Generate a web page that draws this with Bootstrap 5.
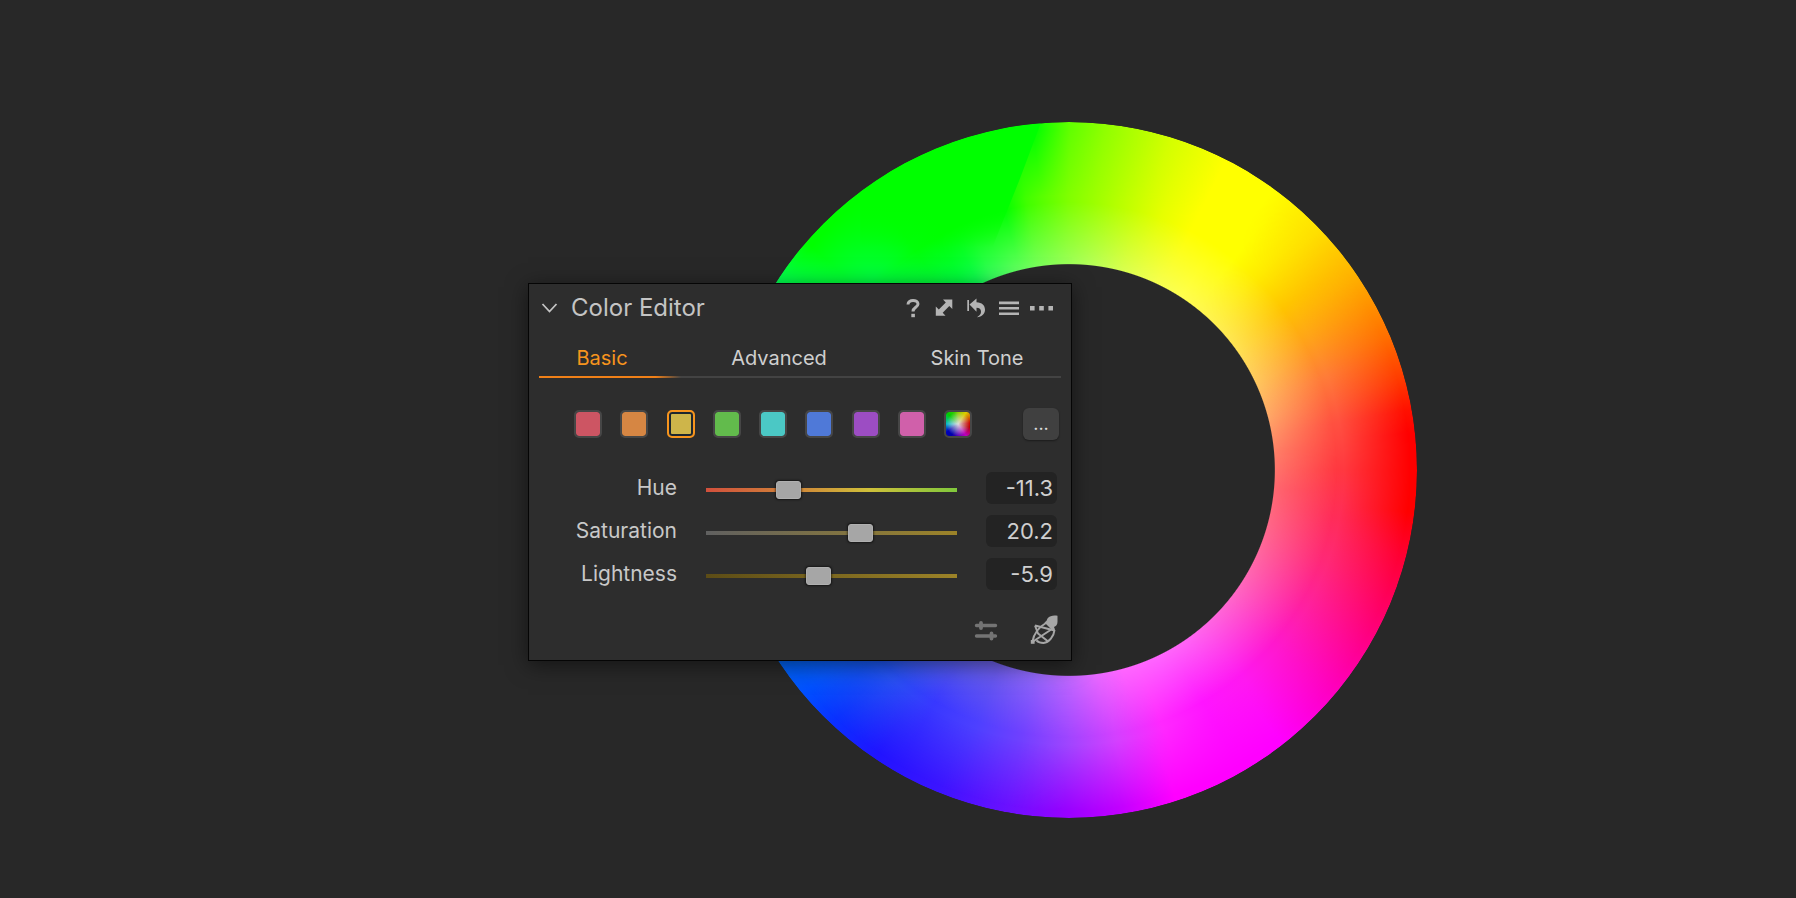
<!DOCTYPE html>
<html lang="en">
<head>
<meta charset="utf-8">
<meta name="viewport" content="width=device-width, initial-scale=1">
<title>Color Editor</title>
<link href="https://cdn.jsdelivr.net/npm/bootstrap@5.3.0/dist/css/bootstrap.min.css" rel="stylesheet">
<style>
  body { background: #282828; color: #c8c8c8; font-family: Inter, "Liberation Sans", sans-serif; }
  .stage { padding: 122px 16px 80px 29.4vw; overflow: hidden; }
  .scene { max-width: 889px; grid-template-columns: 1fr; }
  .scene > * { grid-area: 1 / 1; }

  /* colour wheel: three hue sweeps, cross-faded from the rim to the hole */
  .wheel { width: 696px; aspect-ratio: 1; justify-self: end; display: grid; border-radius: 50%;
    -webkit-mask: radial-gradient(circle closest-side, transparent 59%, #000 59.3%);
    mask: radial-gradient(circle closest-side, transparent 59%, #000 59.3%); }
  .wheel > * { grid-area: 1 / 1; border-radius: 50%; }
  .sweep-rim { background: conic-gradient(#60ff00 0deg, #90ff00 6deg, #d4ff00 17deg, #ff0 27deg, #ff0 36deg, #ffe000 46deg, #ffb000 56deg, #ff7000 67deg, #ff3800 75deg, #ff1000 80deg, #f00 84deg, #f00 97deg, #ff0030 104deg, #ff0070 116deg, #ff00c0 130deg, #f0f 142deg, #f0f 162deg, #c400ff 171deg, #9a00ff 180deg, #6c10ff 190deg, #3c14ff 202deg, #2014ff 214deg, #0a30ff 223deg, #0050ff 230deg, #0066f0 237deg, #0cc 270deg, #00ff60 300deg, #00ff50 303deg, #0f0 311deg, #0f0 354deg, #30ff00 357deg, #60ff00 360deg); }
  .sweep-mid { background: conic-gradient(#80ff00 0deg, #b4ff00 10deg, #e6ff00 20deg, #ff0 27deg, #ff0 38deg, #ffec00 44deg, #ffc400 53deg, #ffa418 61deg, #ff7c38 70deg, #ff5040 80deg, #ff3840 90deg, #ff2c58 100deg, #ff2878 110deg, #ff20a0 120deg, #ff18cc 130deg, #ff18f0 140deg, #ff14ff 150deg, #ff28ff 160deg, #d440ff 170deg, #a045ff 180deg, #7040ff 190deg, #4d40ff 200deg, #3838ff 210deg, #2850f4 220deg, #1858f0 226deg, #0cc 270deg, #00ff50 308deg, #00ff3c 315deg, #00ff08 325deg, #0f0 332deg, #0f0 346deg, #40ff00 351deg, #80ff00 360deg);
    -webkit-mask: radial-gradient(circle closest-side, #000 79%, transparent 98%);
    mask: radial-gradient(circle closest-side, #000 79%, transparent 98%); }
  .sweep-hole { background: conic-gradient(#9cff58 0deg, #b4ff58 6deg, #d8ff50 15deg, #f4ff50 25deg, #ffff50 33deg, #fff050 45deg, #ffe055 55deg, #ffc860 65deg, #ffa868 75deg, #ff8068 85deg, #ff6870 95deg, #ff6888 105deg, #ff68a4 115deg, #ff68c0 125deg, #ff66dc 135deg, #ff66f4 145deg, #f6f 155deg, #f6f 165deg, #e868ff 172deg, #c068ff 180deg, #9068f8 190deg, #7060e8 200deg, #48d 240deg, #00ff50 330deg, #10ff58 334deg, #38ff60 338deg, #60ff60 345deg, #88ff58 355deg, #9cff58 360deg);
    -webkit-mask: radial-gradient(circle closest-side, #000 59%, transparent 77%);
    mask: radial-gradient(circle closest-side, #000 59%, transparent 77%); }
  .clipped-green { background: linear-gradient(#0f0 12%, transparent 18%); clip-path: polygon(20% 0, 46% 0, 43% 8%, 39% 18%, 20% 18%); }

  /* tool panel */
  .panel { width: 544px; max-width: 100%; background: #2d2d2d; border: 1px solid #050505; z-index: 1;
    box-shadow: 0 4px 20px rgba(0, 0, 0, .5); padding: 8px 0 16px; margin-top: 4px; }
  .panel button { background: none; border: 0; padding: 0; color: inherit; }
  .panel svg { display: block; }
  .bar { height: 32px; padding: 0 18px 0 12px; }
  .title { font-size: 24px; line-height: 32px; font-weight: 400; margin: 0 auto 0 12px; color: #c4c4c4; }
  .bar-tools { gap: 14px; color: #b4b4b4; }
  .bar-menus { gap: 11px; }
  .tabs { display: grid; grid-template-columns: 126fr 228fr 168fr; height: 40px; margin: 14px 10px 0;
    background: linear-gradient(#434343, #434343) bottom / 100% 2px no-repeat; }
  .panel .tabs button { font-size: 20px; line-height: 24px; padding-bottom: 0; color: #cfcfcf; white-space: nowrap; }
  .panel .tabs .picked { color: #f7941d; margin-right: -16px; padding-right: 16px;
    background: linear-gradient(90deg, #f08018 82%, #434343) bottom / 100% 2px no-repeat; }
  .swatches { height: 32px; margin: 30px 12px 0 45px; }
  .swatch-set { width: 398px; }
  .swatch { appearance: none; width: 28px; height: 28px; margin: 0; border: 2px solid #464646; border-radius: 5px; background: var(--tint) padding-box; }
  .swatch:checked { border-color: #f7941d; box-shadow: inset 0 0 0 2px #1d2630; }
  .swatch-all { background: radial-gradient(circle, #ddd, transparent 70%) padding-box, conic-gradient(from 0deg, #8c0 0deg, #dc0 35deg, #c00 85deg, #b00 105deg, #b0b 145deg, #60b 175deg, #00a 210deg, #00b 235deg, #0bc 270deg, #0c0 315deg, #3c0 340deg, #8c0 360deg) padding-box; }
  .panel .more { width: 36px; height: 32px; border-radius: 6px; background: #404040; box-shadow: 0 1px 2px rgba(0, 0, 0, .4); font-size: 18px; line-height: 32px; color: #ddd; }
  .sliders { display: grid; gap: 11px; margin: 32px 14px 0; }
  .slider-row { display: grid; grid-template-columns: 134px 1fr 71px; column-gap: 29px; align-items: center; height: 32px; }
  .slider-row label { font-size: 21px; line-height: 24px; text-align: right; }
  .track { appearance: none; width: 100%; height: 20px; margin: 3px 0 0; background: var(--ramp) center / 100% 4px no-repeat; }
  .track::-webkit-slider-thumb { appearance: none; width: 25px; height: 18px; border-radius: 3px; background: #a6a6a6; border: 1px solid #b0b0b0; box-shadow: 0 0 2px 1px rgba(0, 0, 0, .5); }
  .track::-moz-range-thumb { width: 25px; height: 18px; border-radius: 3px; background: #a6a6a6; border: 1px solid #b0b0b0; }
  .amount { width: 100%; height: 32px; border: 0; border-radius: 6px; background: #232323; color: #cfcfcf; font-size: 22px; line-height: 24px; text-align: right; padding: 0 4px; }
  .foot { height: 32px; margin: 24px 13px 0; gap: 32px; color: #a6a6a6; }
  .panel { padding-bottom: 14px; }
</style>
</head>
<body>
<main class="stage min-vh-100">
  <div class="scene d-grid align-items-center">
    <div class="wheel" role="img" aria-label="Color wheel">
      <div class="sweep-rim"></div>
      <div class="sweep-mid"></div>
      <div class="sweep-hole"></div>
      <div class="clipped-green"></div>
    </div>

    <section class="panel position-relative" aria-label="Color Editor">
      <header class="bar d-flex align-items-center">
        <button type="button" aria-label="Collapse">
          <svg width="18" height="18" viewBox="0 0 18 18" fill="none" stroke="#c4c4c4" stroke-width="1.8"><path d="M1.500 5l7 7.500L15.500 5"/></svg>
        </button>
        <h1 class="title">Color Editor</h1>
        <div class="bar-tools d-flex align-items-center">
          <button type="button" aria-label="Help">
            <svg width="16" height="20" viewBox="0 0 16 20" fill="none" stroke="currentColor" stroke-width="3"><path d="M3 6.500C3 1.200 13 1.200 13 6c0 3.500-5 3.200-5 7.500"/><path d="M6.300 17.500h3.600" stroke-width="3.400"/></svg>
          </button>
          <button type="button" aria-label="Expand">
            <svg width="18" height="20" viewBox="0 0 18 20" fill="currentColor"><path d="M8 1.500h9.300V11l-3-3-6.600 6.800 2.800 3H.8V8.500l3 3L10.800 4.600z"/></svg>
          </button>
          <button type="button" aria-label="Reset">
            <svg width="18" height="20" viewBox="0 0 18 20" fill="currentColor"><path d="M.3 2h1.700v11H.3zM2.500 6.500L9.500.5v3.800c5.500.2 8.500 3.200 8.500 7.500 0 4-3 7-8 7.400 3-1.700 4-3.400 4-5.400 0-2.600-1.500-3.800-4.500-4v4z"/></svg>
          </button>
          <div class="bar-menus d-flex">
            <button type="button" aria-label="Presets">
              <svg width="20" height="20" viewBox="0 0 20 20" fill="currentColor"><path d="M0 3.600h20v2.600H0zM0 9h20v2.600H0zM0 14.400h20V17H0z"/></svg>
            </button>
            <button type="button" aria-label="More options">
              <svg width="23" height="20" viewBox="0 0 23 20" fill="currentColor"><path d="M0 8h4.600v4.400H0zM9.200 8h4.600v4.400H9.200zM18.400 8H23v4.400h-4.600z"/></svg>
            </button>
          </div>
        </div>
      </header>

      <nav class="tabs" aria-label="Editor mode">
        <button type="button" class="picked" aria-current="true">Basic</button>
        <button type="button">Advanced</button>
        <button type="button">Skin Tone</button>
      </nav>

      <div class="swatches d-flex align-items-center justify-content-between">
        <div class="swatch-set d-flex justify-content-between" role="radiogroup" aria-label="Color range">
          <input class="swatch" type="radio" name="range" aria-label="Red" style="--tint:linear-gradient(#cd5563,#cd5563)">
          <input class="swatch" type="radio" name="range" aria-label="Orange" style="--tint:linear-gradient(#d68643,#d68643)">
          <input class="swatch" type="radio" name="range" aria-label="Yellow" style="--tint:linear-gradient(#ceb54a,#ceb54a)" checked>
          <input class="swatch" type="radio" name="range" aria-label="Green" style="--tint:linear-gradient(#62bb4c,#62bb4c)">
          <input class="swatch" type="radio" name="range" aria-label="Cyan" style="--tint:linear-gradient(#4bc8c5,#4bc8c5)">
          <input class="swatch" type="radio" name="range" aria-label="Blue" style="--tint:linear-gradient(#4f79d8,#4f79d8)">
          <input class="swatch" type="radio" name="range" aria-label="Purple" style="--tint:linear-gradient(#9c4dc3,#9c4dc3)">
          <input class="swatch" type="radio" name="range" aria-label="Pink" style="--tint:linear-gradient(#d060aa,#d060aa)">
          <input class="swatch swatch-all" type="radio" name="range" aria-label="All colors">
        </div>
        <button type="button" class="more" aria-label="Edit ranges">...</button>
      </div>

      <div class="sliders">
        <div class="slider-row">
          <label for="hue">Hue</label>
          <input class="track" id="hue" type="range" min="-30" max="30" step="0.1" value="-11.3" style="--ramp:linear-gradient(90deg,#d2503c,#d08a38 38%,#cfc03a 65%,#80c83c)">
          <input class="amount" type="text" value="-11.3" aria-label="Hue value">
        </div>
        <div class="slider-row">
          <label for="sat">Saturation</label>
          <input class="track" id="sat" type="range" min="-80" max="80" step="0.1" value="20.2" style="--ramp:linear-gradient(90deg,#606060,#9c8328)">
          <input class="amount" type="text" value="20.2" aria-label="Saturation value">
        </div>
        <div class="slider-row">
          <label for="light">Lightness</label>
          <input class="track" id="light" type="range" min="-50" max="50" step="0.1" value="-5.9" style="--ramp:linear-gradient(90deg,#5c4c16,#9c8328)">
          <input class="amount" type="text" value="-5.9" aria-label="Lightness value">
        </div>
      </div>

      <footer class="foot d-flex align-items-center justify-content-end">
        <button type="button" aria-label="Adjust ranges">
          <svg width="24" height="24" viewBox="0 0 24 24" stroke="#747474" stroke-linecap="round" fill="none"><path d="M2.500 7.500h19M2.500 18h19" stroke-width="3.400"/><path d="M7 5v5M17.500 15.500v5" stroke-width="3.800"/></svg>
        </button>
        <button type="button" aria-label="Pick color">
          <svg width="28" height="30" viewBox="0 0 28 30" fill="none" stroke="currentColor" stroke-width="2" stroke-linejoin="round"><path d="M17.500 3.500C20 .8 23 .2 27.500.8v6c0 3-1.500 4.700-3.500 5.200l1 2.500-2 1.500-8.500-8.500 2-1.700z" fill="currentColor" stroke="none"/><path d="M16 8C9 12 4 18 2.500 26.500"/><path d="M5 10.500l19.500 5M5 10.500l3 8 9.500 7.500M24.500 15C24 21 19 27.500 13.500 28c-3 0-5-.5-7-2.500M22 14L3 26.500"/><path d="M.8 25h3.800v3.800H.8z" fill="currentColor" stroke="none"/></svg>
        </button>
      </footer>
    </section>
  </div>
</main>
<script src="https://cdn.jsdelivr.net/npm/bootstrap@5.3.0/dist/js/bootstrap.bundle.min.js"></script>
</body>
</html>
